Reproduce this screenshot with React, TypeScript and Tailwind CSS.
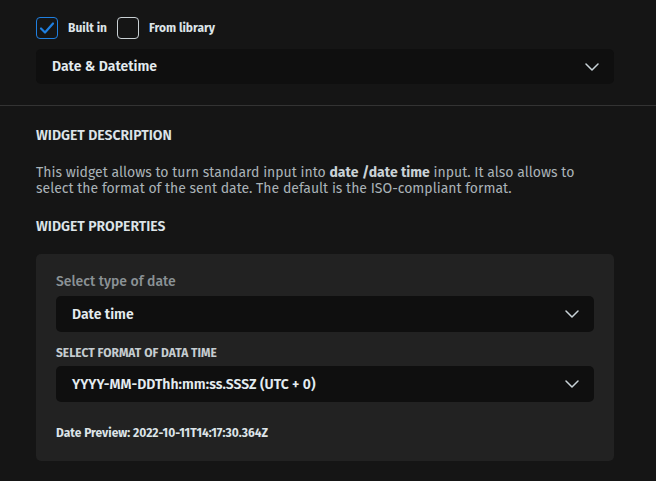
import React from "react";

function Chevron() {
  return (
    <svg width="14" height="8" viewBox="0 0 14 8" fill="none">
      <path d="M1 1 L7 7 L13 1" stroke="#c9d3d8" strokeWidth="1.5" strokeLinecap="round" strokeLinejoin="round" />
    </svg>
  );
}

function Select({ label, h }: { label: string; h: string }) {
  return (
    <div className={`flex items-center justify-between rounded-[5px] bg-[#0f0f0f] pl-4 pr-[15px] ${h}`}>
      <span className="text-[14px] font-semibold text-[#e4ecf0]">{label}</span>
      <Chevron />
    </div>
  );
}

export default function App() {
  return (
    <div
      className="w-[656px] h-[481px] bg-[#151515] overflow-hidden"
      style={{ fontFamily: "'Fira Sans', Lato, 'Noto Sans', sans-serif" }}
    >
      <div className="pl-9 pr-[42px] pt-[17px] pb-[21px]">
        <div className="flex items-center h-[22px]">
          <div className="w-[22px] h-[22px] rounded-[4px] border-[1.5px] border-[#1f7fe0] flex items-center justify-center">
            <svg width="16" height="14" viewBox="0 0 16 14" fill="none">
              <path d="M2 7.5 L6 11.5 L14 2.5" stroke="#1f7fe0" strokeWidth="2.2" strokeLinecap="round" strokeLinejoin="round" />
            </svg>
          </div>
          <span className="ml-[10px] text-[12px] font-bold text-[#dde4e8]">Built in</span>
          <div className="ml-[10px] w-[22px] h-[22px] rounded-[4px] border-[1.5px] border-[#c9d0d4]" />
          <span className="ml-[10px] text-[12px] font-bold text-[#dde4e8]">From library</span>
        </div>
        <div className="mt-[10px]">
          <Select label="Date & Datetime" h="h-[35px]" />
        </div>
      </div>
      <div className="h-px bg-[#333333]" />
      <div className="pl-9 pr-[42px]">
        <div className="mt-[20px] h-[20px] leading-[20px] text-[14px] font-semibold text-[#dde4e8]">WIDGET DESCRIPTION</div>
        <p className="mt-[19px] text-[14px] leading-[16px] text-[#aab3b8]">
          This widget allows to turn standard input into <b className="font-bold text-[#c9d2d6]">date</b>{" "}
          <b className="font-bold text-[#c9d2d6]">/date time</b> input. It also allows to select the format of the sent date. The default is the ISO-compliant format.
        </p>
        <div className="mt-[20px] h-[20px] leading-[20px] text-[14px] font-semibold text-[#dde4e8]">WIDGET PROPERTIES</div>
        <div className="mt-[17px] rounded-[5px] bg-[#222222] px-5 pt-[18px] pb-[20px]">
          <div className="h-[20px] leading-[20px] text-[14px] font-medium text-[#8b9296]">Select type of date</div>
          <div className="mt-[4px]">
            <Select label="Date time" h="h-[36px]" />
          </div>
          <div className="mt-[13px] h-[16px] leading-[16px] text-[12px] font-bold text-[#c5ccd0]">SELECT FORMAT OF DATA TIME</div>
          <div className="mt-[5px]">
            <Select label="YYYY-MM-DDThh:mm:ss.SSSZ (UTC + 0)" h="h-[36px]" />
          </div>
          <div className="mt-[23px] h-[16px] leading-[16px] text-[12px] font-bold text-[#dde4e8]">Date Preview: 2022-10-11T14:17:30.364Z</div>
        </div>
      </div>
    </div>
  );
}
